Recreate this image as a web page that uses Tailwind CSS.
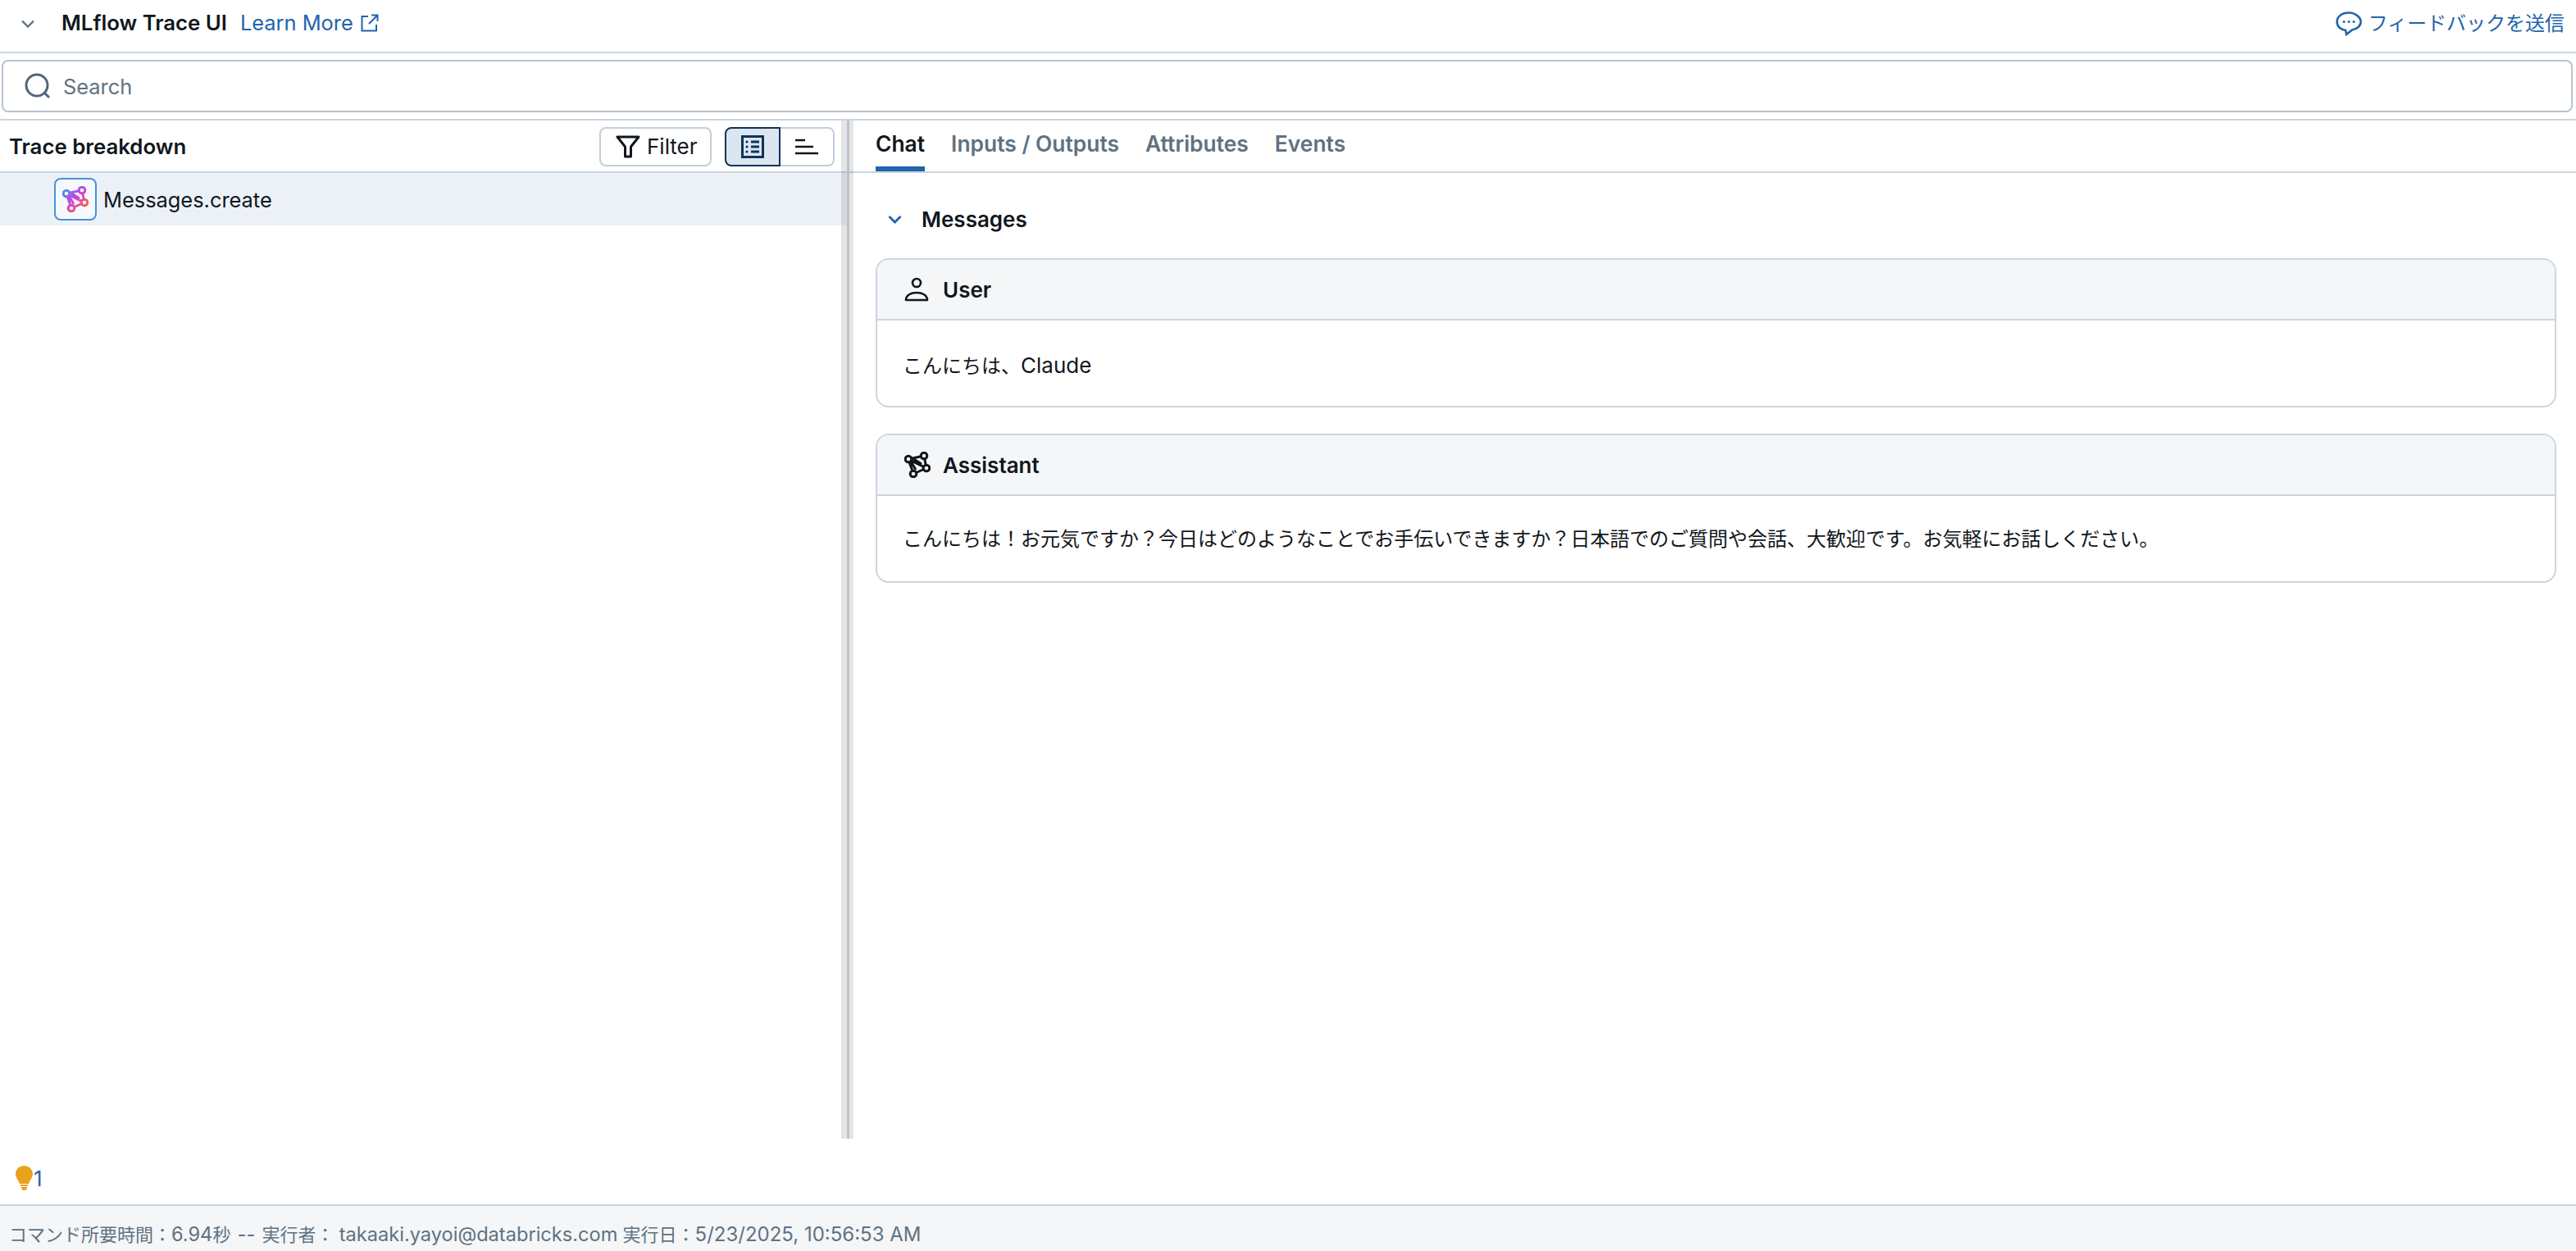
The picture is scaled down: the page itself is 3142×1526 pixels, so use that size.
<!DOCTYPE html>
<html lang="ja">
<head>
  <meta charset="UTF-8" />
  <title>MLflow Trace UI</title>
  <script src="https://cdn.jsdelivr.net/npm/@tailwindcss/browser@4"></script>
</head>
<body class="bg-white">
  <svg class="absolute w-0 h-0" aria-hidden="true">
    <defs>
      <linearGradient id="logoGrad" gradientUnits="userSpaceOnUse" x1="0" y1="0" x2="32" y2="32">
        <stop offset="0.1" stop-color="#4299e0" />
        <stop offset="0.45" stop-color="#ca42e0" />
        <stop offset="0.85" stop-color="#ff5f46" />
      </linearGradient>
    </defs>
  </svg>
  <div class="flex flex-col h-[1526px] w-[3142px] overflow-hidden font-['Inter','Noto_Sans_CJK_JP',sans-serif] text-[25.4px] text-[#11171c]">

    <!-- top bar -->
    <div class="flex items-center justify-between h-[63px] shrink-0 pr-[14px] pb-[6px]">
      <div class="flex items-center">
        <svg class="ml-[26px] w-[16px] h-[10px] text-[#5f7281]" viewBox="0 0 16 10" fill="none" stroke="currentColor" stroke-width="2.4"><path d="M1 1.5l7 7 7-7" /></svg>
        <span class="ml-[33px] font-semibold text-[25.8px]">MLflow Trace UI</span>
        <a class="ml-[16px] flex items-center text-[#2264ab]">Learn More
          <svg class="ml-[9px] w-[22px] h-[22px]" viewBox="0 0 22 22" fill="none" stroke="currentColor" stroke-width="2"><path d="M9 3H1.5v17.5H19V13" /><path d="M13 1.5h7.5V9M20.5 1.5L10 12" /></svg>
        </a>
      </div>
      <a class="flex items-center text-[24px] text-[#2264ab]">
        <svg class="mr-[7px] w-[32px] h-[30px]" viewBox="0 0 32 30" fill="none" stroke="currentColor" stroke-width="2.6"><path d="M16 1.5C8 1.5 1.5 6 1.5 12.500S7 22.500 12 23l1 5 7-5.500c6-1 10.500-5 10.500-10S24 1.500 16 1.500z" /><g fill="currentColor" stroke="none"><circle cx="10" cy="12.500" r="1.500" /><circle cx="16" cy="12.500" r="1.500" /><circle cx="22" cy="12.500" r="1.500" /></g></svg>
        フィードバックを送信
      </a>
    </div>

    <!-- search -->
    <div class="border-y-2 border-[#cbd5df] px-[2px] pr-[4px] py-[8px] shrink-0">
      <div class="flex items-center h-[64px] border-2 border-[#b8c4d0] rounded-[8px] pl-[26px]">
        <svg class="w-[32px] h-[32px] text-[#53667a]" viewBox="0 0 32 32" fill="none" stroke="currentColor" stroke-width="3"><circle cx="15" cy="15" r="13" /><path d="M24.500 24.500L30 30" /></svg>
        <span class="ml-[15px] pt-[2px] text-[#5f7281]">Search</span>
      </div>
    </div>

    <!-- main panes -->
    <div class="relative flex h-[1242px] shrink-0">
      <div class="w-[1034px] shrink-0">
        <div class="flex items-center justify-between h-[64px] border-b-2 border-[#cbd5df] pl-[11px] pr-[16px] pt-[1px]">
          <span class="font-semibold text-[25.8px] pt-[2px]">Trace breakdown</span>
          <div class="flex items-center">
            <div class="flex items-center h-[48px] w-[137px] border-2 border-[#c3ced9] rounded-[8px] pl-[18px]">
              <svg class="w-[30px] h-[28px]" viewBox="0 0 30 28" fill="none" stroke="currentColor" stroke-width="3"><path d="M2 2h26L18.500 14v12h-7V14z" stroke-linejoin="round" /></svg>
              <span class="ml-[8px] text-[26px]">Filter</span>
            </div>
            <div class="flex ml-[16px] h-[48px]">
              <div class="flex items-center justify-center w-[68px] bg-[#dbe6f1] border-2 border-[#0e3358] rounded-l-[8px]">
                <svg class="w-[28px] h-[28px] text-[#0e3358]" viewBox="0 0 28 28" fill="none" stroke="currentColor" stroke-width="3"><rect x="1.500" y="1.500" width="25" height="25" /><path d="M12 8h10M12 14h10M12 20h10" /><g fill="currentColor" stroke="none"><circle cx="7" cy="8" r="1.600" /><circle cx="7" cy="14" r="1.600" /><circle cx="7" cy="20" r="1.600" /></g></svg>
              </div>
              <div class="flex items-center justify-center w-[66px] border-2 border-l-0 border-[#c3ced9] rounded-r-[8px]">
                <svg class="w-[28px] h-[20px]" viewBox="0 0 28 20" fill="none" stroke="currentColor" stroke-width="2.400"><path d="M0 2h12M0 10h22M0 18h28" /></svg>
              </div>
            </div>
          </div>
        </div>
        <div class="flex items-center h-[64px] bg-[#ecf1f8] pl-[66px]">
          <div class="flex items-center justify-center w-[52px] h-[52px] bg-[#f5f9fe] border-2 border-[#4a90d9] rounded-[8px]">
            <svg class="w-[32px] h-[32px]" viewBox="0 0 32 32" fill="none" stroke="url(#logoGrad)" stroke-width="3"><circle cx="5" cy="9" r="3.800" /><circle cx="24" cy="5" r="3.800" /><circle cx="27" cy="20" r="3.800" /><circle cx="11" cy="27" r="3.800" /><path d="M8.700 8.200L20.300 5.800M8.300 10.800L23.600 18.300M6 12.700L10 23.300M24.800 8.700L26.200 16.300M23.500 21.500L14.500 25.500M8 12L14 22M10 8L21 15" /></svg>
          </div>
          <span class="ml-[8px] pt-[2px]">Messages.create</span>
        </div>
      </div>

      <div class="flex-1 min-w-0">
        <div class="flex h-[64px] border-b-2 border-[#cbd5df] pl-[34px] gap-[32px] font-semibold text-[26.4px] text-[#5f7281]">
          <div class="flex flex-col h-[62px] text-[#11171c]"><span class="h-[56px] flex items-center pt-[2px]">Chat</span><span class="h-[6px] bg-[#2264ab]"></span></div>
          <span class="h-[56px] flex items-center pt-[2px]">Inputs / Outputs</span>
          <span class="h-[56px] flex items-center pt-[2px]">Attributes</span>
          <span class="h-[56px] flex items-center pt-[2px]">Events</span>
        </div>
        <div class="pl-[34px] pr-[24px]">
          <div class="flex items-center h-[104px] pt-[8px]">
            <svg class="ml-[15px] w-[17px] h-[11px] text-[#2264ab]" viewBox="0 0 17 11" fill="none" stroke="currentColor" stroke-width="2.800"><path d="M1.500 2l7 7 7-7" /></svg>
            <span class="ml-[24px] font-semibold text-[26px]">Messages</span>
          </div>
          <div class="flex flex-col gap-[32px]">
            <div class="h-[182px] border-2 border-[#cbd5df] rounded-[16px] overflow-hidden">
              <div class="flex items-center h-[74px] bg-[#f4f6f8] border-b-2 border-[#cbd5df] pl-[33px]">
                <svg class="w-[30px] h-[30px]" viewBox="0 0 30 30" fill="none" stroke="currentColor" stroke-width="2.600"><circle cx="15" cy="7" r="5" /><path d="M2 28c0-6 6-9 13-9s13 3 13 9z" stroke-linejoin="round" /></svg>
                <span class="ml-[17px] font-semibold text-[26px]">User</span>
              </div>
              <p class="pl-[31px] pt-[35px] text-[24px]">こんにちは、<span class="text-[26px]">Claude</span></p>
            </div>
            <div class="h-[182px] border-2 border-[#cbd5df] rounded-[16px] overflow-hidden">
              <div class="flex items-center h-[74px] bg-[#f4f6f8] border-b-2 border-[#cbd5df] pl-[33px]">
                <svg class="w-[32px] h-[32px]" viewBox="0 0 32 32" fill="none" stroke="currentColor" stroke-width="3"><circle cx="5" cy="9" r="3.800" /><circle cx="24" cy="5" r="3.800" /><circle cx="27" cy="20" r="3.800" /><circle cx="11" cy="27" r="3.800" /><path d="M8.700 8.200L20.300 5.800M8.300 10.800L23.600 18.300M6 12.700L10 23.300M24.800 8.700L26.200 16.300M23.500 21.500L14.500 25.500M8 12L14 22M10 8L21 15" /></svg>
                <span class="ml-[15px] font-semibold text-[26px]">Assistant</span>
              </div>
              <p class="pl-[31px] pt-[35px] text-[24px]">こんにちは！お元気ですか？今日はどのようなことでお手伝いできますか？日本語でのご質問や会話、大歓迎です。お気軽にお話しください。</p>
            </div>
          </div>
        </div>
      </div>

      <!-- resize handle sits over both panes -->
      <div class="absolute top-0 bottom-0 left-[1026px] w-[15px] bg-black/10 flex justify-center">
        <span class="w-[3px] ml-[1px] bg-[#b9c3cf]"></span>
      </div>
    </div>

    <!-- assistant bulb -->
    <div class="flex items-center flex-1 pl-[19px] pt-[16px] text-[26px] text-[#2264ab]">
      <svg class="w-[21px] h-[30px]" viewBox="0 0 21 30" fill="#e8a21d"><path d="M10.500 0C16 0 21 4 21 10c0 4-3 7-5 12H5C3 17 0 14 0 10 0 4 5 0 10.500 0z" /><rect x="6" y="23" width="9" height="2" /><path d="M7 26h7v2l-2 2H9l-2-2z" /></svg>
      <span class="ml-[1px]">1</span>
    </div>

    <!-- footer -->
    <div class="flex items-center h-[57px] shrink-0 border-t-2 border-[#cbd5df] bg-[#f4f6f8] pl-[11px] pt-[14px] text-[22px] text-[#5f7281]">
      <span class="whitespace-pre">コマンド所要時間：<span class="text-[23.6px]">6.94</span>秒 <span class="text-[23.6px] px-[2px]">--</span> 実行者： <span class="text-[23.6px]">takaaki.yayoi@databricks.com</span> 実行日：<span class="text-[24px]">5/23/2025, 10:56:53 AM</span></span>
    </div>
  </div>
</body>
</html>
